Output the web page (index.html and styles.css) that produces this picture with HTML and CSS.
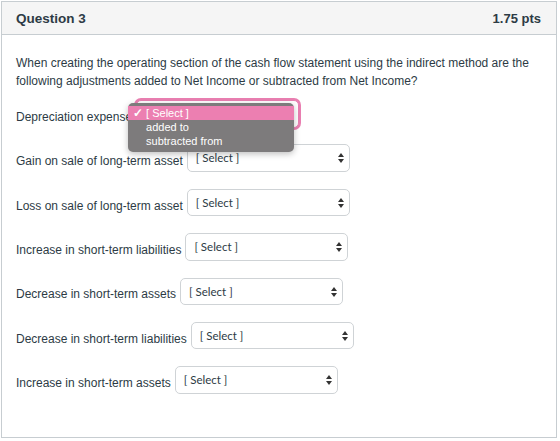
FILE: index.html
```html
<!DOCTYPE html>
<html>
<head>
    <title>Question 3</title>
    <link rel="stylesheet" href="styles.css">
</head>
<body>

    <div class="question">
        <div class="question-header">
            <span class="question-title">Question 3</span>
            <span class="question-points">1.75 pts</span>
        </div>

        <div class="question-body">
            <p class="prompt">When creating the operating section of the cash flow statement using the indirect method are the following adjustments added to Net Income or subtracted from Net Income?</p>

            <div class="answers">
                <div class="answer-row">
                    <span class="answer-label">Depreciation expense</span>
                    <div class="select-wrap">
                        <div class="select focused">
                            <span class="select-text">[ Select ]</span>
                            <svg class="select-arrow" width="6" height="10" viewBox="0 0 6 10"><path d="M3 0 L6 4 H0 Z M0 6 H6 L3 10 Z" fill="#333"/></svg>
                        </div>
                        <ul class="options-menu">
                            <li class="option selected"><span class="check">&#10003;</span>[ Select ]</li>
                            <li class="option">added to</li>
                            <li class="option">subtracted from</li>
                        </ul>
                    </div>
                </div>

                <div class="answer-row">
                    <span class="answer-label">Gain on sale of long-term asset</span>
                    <div class="select">
                        <span class="select-text">[ Select ]</span>
                        <svg class="select-arrow" width="6" height="10" viewBox="0 0 6 10"><path d="M3 0 L6 4 H0 Z M0 6 H6 L3 10 Z" fill="#333"/></svg>
                    </div>
                </div>

                <div class="answer-row">
                    <span class="answer-label">Loss on sale of long-term asset</span>
                    <div class="select">
                        <span class="select-text">[ Select ]</span>
                        <svg class="select-arrow" width="6" height="10" viewBox="0 0 6 10"><path d="M3 0 L6 4 H0 Z M0 6 H6 L3 10 Z" fill="#333"/></svg>
                    </div>
                </div>

                <div class="answer-row">
                    <span class="answer-label">Increase in short-term liabilities</span>
                    <div class="select">
                        <span class="select-text">[ Select ]</span>
                        <svg class="select-arrow" width="6" height="10" viewBox="0 0 6 10"><path d="M3 0 L6 4 H0 Z M0 6 H6 L3 10 Z" fill="#333"/></svg>
                    </div>
                </div>

                <div class="answer-row">
                    <span class="answer-label">Decrease in short-term assets</span>
                    <div class="select">
                        <span class="select-text">[ Select ]</span>
                        <svg class="select-arrow" width="6" height="10" viewBox="0 0 6 10"><path d="M3 0 L6 4 H0 Z M0 6 H6 L3 10 Z" fill="#333"/></svg>
                    </div>
                </div>

                <div class="answer-row">
                    <span class="answer-label">Decrease in short-term liabilities</span>
                    <div class="select">
                        <span class="select-text">[ Select ]</span>
                        <svg class="select-arrow" width="6" height="10" viewBox="0 0 6 10"><path d="M3 0 L6 4 H0 Z M0 6 H6 L3 10 Z" fill="#333"/></svg>
                    </div>
                </div>

                <div class="answer-row">
                    <span class="answer-label">Increase in short-term assets</span>
                    <div class="select">
                        <span class="select-text">[ Select ]</span>
                        <svg class="select-arrow" width="6" height="10" viewBox="0 0 6 10"><path d="M3 0 L6 4 H0 Z M0 6 H6 L3 10 Z" fill="#333"/></svg>
                    </div>
                </div>
            </div>
        </div>
    </div>

</body>
</html>
```

FILE: styles.css
```css
body {
    margin: 0;
    padding: 1px;
    font-family: 'Liberation Sans', Arial, sans-serif;
    color: #2d3b45;
    background-color: #ffffff;
}

.question {
    width: 554px;
    height: 435px;
    border: 1px solid #c7cdd1;
}

.question-header {
    display: flex;
    justify-content: space-between;
    align-items: center;
    height: 32px;
    padding: 0 15px 0 14px;
    background-color: #f5f5f5;
    border-bottom: 1px solid #c7cdd1;
    font-weight: bold;
}

.question-title {
    font-size: 13.5px;
}

.question-points {
    font-size: 13px;
}

.question-body {
    padding: 19px 15px 0 14px;
}

.prompt {
    margin: 0;
    font-size: 12px;
    line-height: 18px;
}

.answers {
    display: flex;
    flex-direction: column;
    gap: 16.9px;
    margin-top: 10px;
}

.answer-row {
    display: flex;
    align-items: center;
    gap: 4px;
    font-size: 12px;
}

.answer-label {
    padding-top: 6px;
}

.select-wrap {
    position: relative;
    z-index: 5;
}

.select {
    position: relative;
    width: 163px;
    height: 27.5px;
    box-sizing: border-box;
    border: 1px solid #cfd3d6;
    border-radius: 5px;
    background-color: #ffffff;
}

.select.focused {
    box-shadow: 0 0 0 2px #e97fb1;
    border-color: #e97fb1;
}

.select-text {
    position: absolute;
    left: 8px;
    top: 6px;
    font-family: Lato, 'Open Sans', sans-serif;
    font-size: 11.5px;
    color: #2d3b45;
}

.select-arrow {
    position: absolute;
    right: 5px;
    top: 8px;
}

/* open dropdown list over the first select */
.options-menu {
    position: absolute;
    z-index: 10;
    left: -8px;
    top: 3px;
    width: 166px;
    margin: 0;
    padding: 3px 0 4px 0;
    list-style: none;
    background-color: #7d7b7c;
    border-radius: 5px;
    box-shadow: 0 2px 6px rgba(0, 0, 0, 0.25);
    font-size: 11px;
    color: #ffffff;
}

.option {
    height: 14px;
    line-height: 14px;
    padding-left: 18px;
    position: relative;
}

.option.selected {
    background-color: #ec7fb1;
}

.check {
    position: absolute;
    left: 5px;
    font-size: 12px;
    font-weight: bold;
}
```
